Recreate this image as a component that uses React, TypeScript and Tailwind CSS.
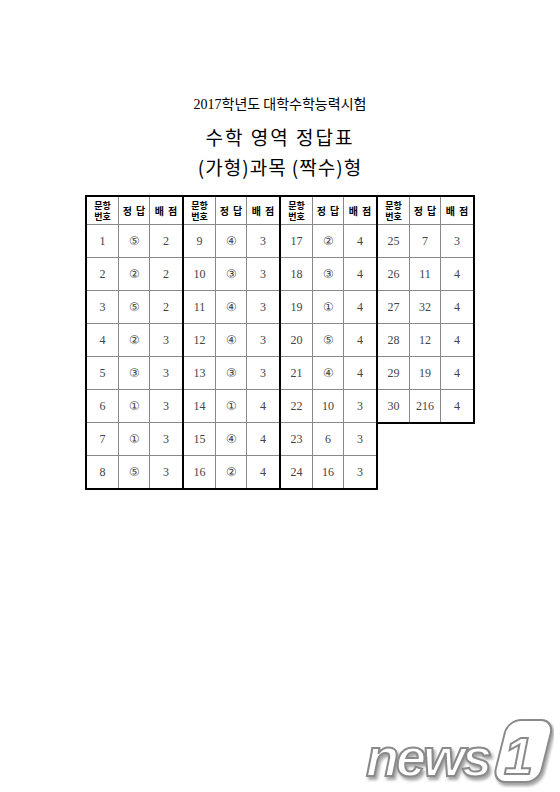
import React from "react";

type Row = [string, string, string];

const groups: Row[][] = [
  [
    ["1", "⑤", "2"],
    ["2", "②", "2"],
    ["3", "⑤", "2"],
    ["4", "②", "3"],
    ["5", "③", "3"],
    ["6", "①", "3"],
    ["7", "①", "3"],
    ["8", "⑤", "3"],
  ],
  [
    ["9", "④", "3"],
    ["10", "③", "3"],
    ["11", "④", "3"],
    ["12", "④", "3"],
    ["13", "③", "3"],
    ["14", "①", "4"],
    ["15", "④", "4"],
    ["16", "②", "4"],
  ],
  [
    ["17", "②", "4"],
    ["18", "③", "4"],
    ["19", "①", "4"],
    ["20", "⑤", "4"],
    ["21", "④", "4"],
    ["22", "10", "3"],
    ["23", "6", "3"],
    ["24", "16", "3"],
  ],
  [
    ["25", "7", "3"],
    ["26", "11", "4"],
    ["27", "32", "4"],
    ["28", "12", "4"],
    ["29", "19", "4"],
    ["30", "216", "4"],
  ],
];

const serif = { fontFamily: '"Liberation Serif", "DejaVu Serif", serif' };

function Group({ rows, idx }: { rows: Row[]; idx: number }) {
  const border =
    idx === 0
      ? "border-2 border-black"
      : "border-t-2 border-r-2 border-b-2 border-black";
  return (
    <div className={`flex flex-col self-start bg-white ${border}`}>
      <div className="grid grid-cols-[32px_31px_32px] h-[28px] border-b border-[#888]">
        <div className="flex items-center justify-center border-r border-[#888]">
          <span className="whitespace-pre-line text-center text-[9px] font-bold leading-[11px] text-black">
            {"문항\n번호"}
          </span>
        </div>
        <div className="flex items-center justify-center whitespace-nowrap border-r border-[#888] text-[10px] font-bold tracking-[4px] pl-[4px] text-black">
          정답
        </div>
        <div className="flex items-center justify-center whitespace-nowrap text-[10px] font-bold tracking-[4px] pl-[4px] text-black">
          배점
        </div>
      </div>
      {rows.map((r, i) => (
        <div
          key={i}
          className={`grid grid-cols-[32px_31px_32px] ${
            i === rows.length - 1 ? "h-[32px]" : "h-[33px] border-b border-[#888]"
          }`}
          style={serif}
        >
          <div className="flex items-center justify-center border-r border-[#888] text-[12px] text-[#444]">
            {r[0]}
          </div>
          <div className="flex items-center justify-center border-r border-[#888] text-[12px] text-[#444]">
            {r[1]}
          </div>
          <div className="flex items-center justify-center text-[12px] text-[#444]">{r[2]}</div>
        </div>
      ))}
    </div>
  );
}

function Logo() {
  return (
    <svg width="192" height="72" viewBox="0 0 192 72" className="absolute right-[6px] bottom-[4px]">
      <defs>
        <filter id="sh" x="-10%" y="-10%" width="130%" height="130%">
          <feDropShadow dx="2" dy="3" stdDeviation="1.5" floodColor="#9a9a9a" floodOpacity="0.9" />
        </filter>
      </defs>
      <g filter="url(#sh)">
        <text
          x="4"
          y="60"
          fontFamily='"Liberation Sans", Arial, sans-serif'
          fontWeight="bold"
          fontStyle="italic"
          fontSize="54"
          fill="#ffffff"
          stroke="#8a8a8a"
          strokeWidth="2"
          letterSpacing="-3"
        >
          news
        </text>
        <g transform="translate(138 4) skewX(-14)">
          <rect x="8" y="0" width="46" height="62" rx="13" fill="#ffffff" stroke="#8a8a8a" strokeWidth="2" />
        </g>
        <text
          x="142"
          y="58"
          fontFamily='"Liberation Sans", Arial, sans-serif'
          fontWeight="bold"
          fontStyle="italic"
          fontSize="52"
          fill="#ffffff"
          stroke="#8a8a8a"
          strokeWidth="2"
        >
          1
        </text>
      </g>
    </svg>
  );
}

export default function App() {
  return (
    <div
      className="relative w-[560px] h-[792px] overflow-hidden bg-white text-black"
      style={{ fontFamily: '"Noto Sans CJK KR", "Liberation Serif", serif' }}
    >
      <div className="flex flex-col items-center pt-[93px]">
        <div className="h-[20px] leading-[20px] text-[14px]">
          <span style={serif}>2017</span>학년도 대학수학능력시험
        </div>
        <div className="mt-[11px] h-[26px] leading-[26px] text-[19px] tracking-[2px]">수학 영역 정답표</div>
        <div className="mt-[4px] h-[26px] leading-[26px] text-[19px] tracking-[1px]">(가형)과목 (짝수)형</div>
        <div className="mt-[15px] flex flex-row items-start">
          {groups.map((g, i) => (
            <Group key={i} rows={g} idx={i} />
          ))}
        </div>
      </div>
      <Logo />
    </div>
  );
}
